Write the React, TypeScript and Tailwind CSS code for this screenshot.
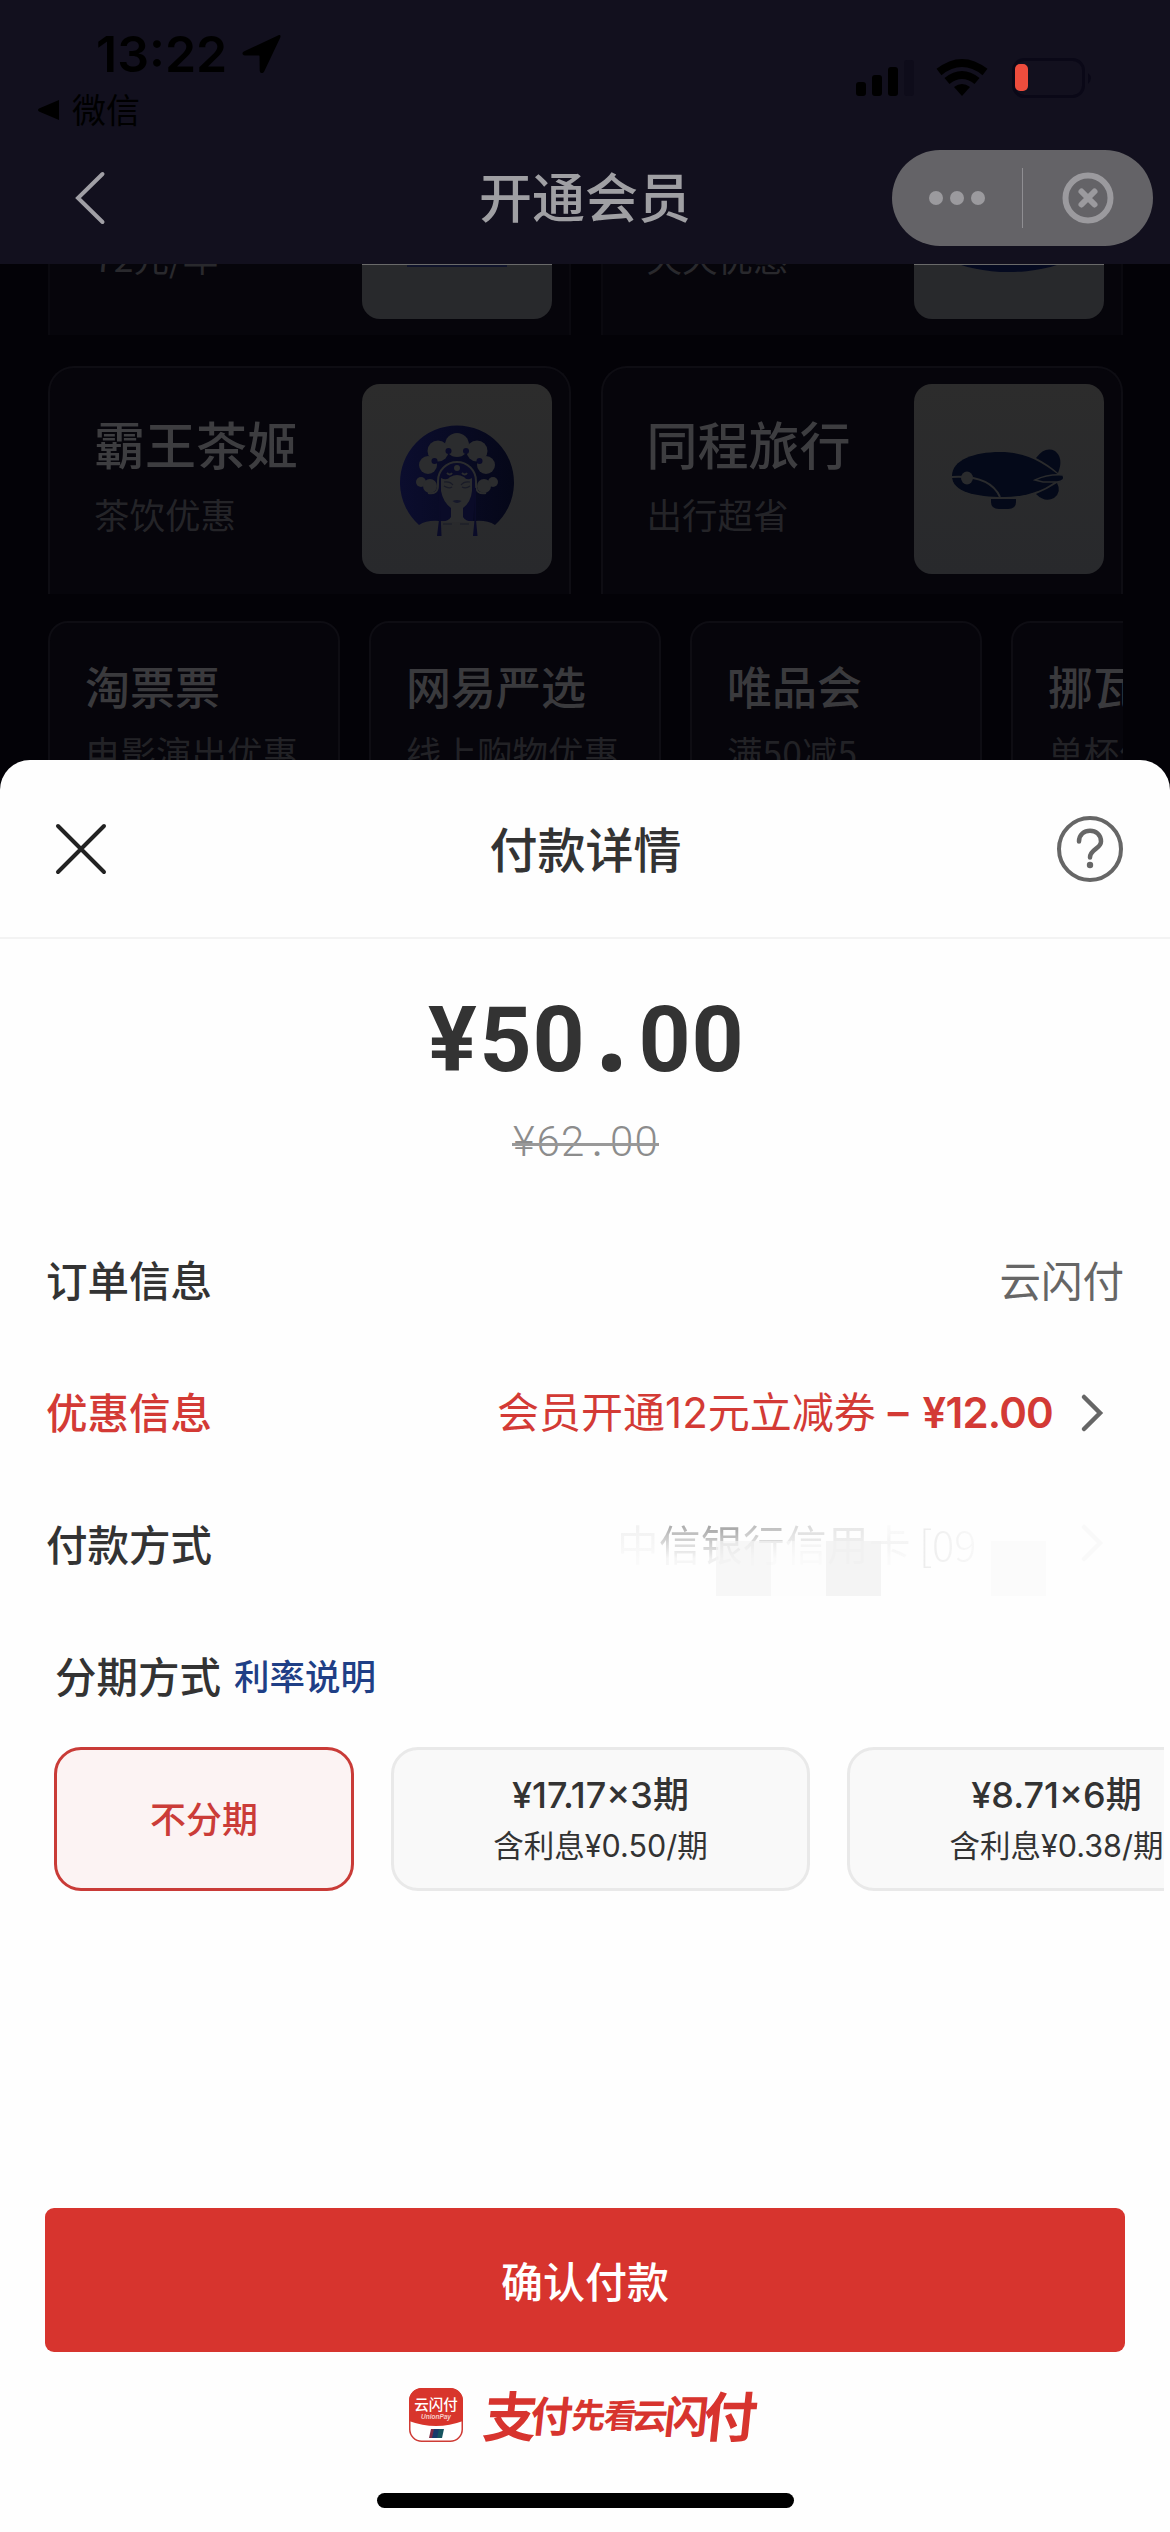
import { clsx } from 'clsx'

interface Perk {
  title: string
  sub: string
  icon?: 'opera' | 'airship'
}

const bigPerks: Perk[] = [
  { title: '霸王茶姬', sub: '茶饮优惠', icon: 'opera' },
  { title: '同程旅行', sub: '出行超省', icon: 'airship' },
]

const smallPerks: Perk[] = [
  { title: '淘票票', sub: '电影演出优惠' },
  { title: '网易严选', sub: '线上购物优惠' },
  { title: '唯品会', sub: '满50减5' },
  { title: '挪瓦咖啡', sub: '单杯优惠' },
]

const plans = [
  { title: '¥17.17×3期', sub: '含利息¥0.50/期' },
  { title: '¥8.71×6期', sub: '含利息¥0.38/期' },
]

const maskedCard = [
  { ch: '中', cls: 'from-[#f2f2f2] to-[#fafafa]' },
  { ch: '信', cls: 'from-[#b0b0b0] via-[#d8d8d8] to-[#f6f6f6]' },
  { ch: '银', cls: 'from-[#a8a8a8] via-[#cccccc] to-[#f0f0f0]' },
  { ch: '行', cls: 'from-[#c0c0c0] via-[#dedede] to-[#f8f8f8]' },
  { ch: '信', cls: 'from-[#dcdcdc] via-[#ececec] to-[#f9f9f9]' },
  { ch: '用', cls: 'from-[#e8e8e8] via-[#eeeeee] to-[#f0f0f0]' },
  { ch: '卡', cls: 'from-[#fafafa] via-[#f4f4f4] to-[#fafafa]' },
]

const slogan = [
  { ch: '支', cls: 'w-[44px] text-[54px]' },
  { ch: '付', cls: 'w-[38px] text-[42px]' },
  { ch: '先', cls: 'w-[36px] text-[34px]' },
  { ch: '看', cls: 'w-[28px] text-[33px]' },
  { ch: '云', cls: 'w-[31px] text-[35px]' },
  { ch: '闪', cls: 'w-[42px] text-[44px]' },
  { ch: '付', cls: 'w-[46px] text-[54px]' },
]

function StatusBar() {
  return (
    <div className="flex h-[134px] justify-between text-black">
      <div className="flex flex-col">
        <div className="mt-[27px] flex items-center pl-[96px]">
          <span className="font-['Inter',sans-serif] text-[50px] leading-[54px] font-semibold">13:22</span>
          <svg viewBox="0 0 40 40" className="ml-[15px] h-[40px] w-[40px]">
            <path d="M36.5 1.2 2.3 17.2C-.6 18.600.2 21.300 3 21.400L16.500 21.600C17.300 21.600 17.500 21.900 17.500 22.600L17.700 36.500C17.800 39.600 21 40 22.300 37.200L38.300 3.400C39 1.500 38 .5 36.500 1.200Z" />
          </svg>
        </div>
        <div className="mt-[8px] flex items-center gap-[12px] pl-[38px]">
          <svg viewBox="0 0 22 22" className="h-[22px] w-[22px]">
            <path d="M21 1v20L1 12.500q-2-1.500 0-3z" />
          </svg>
          <span className="-mt-[2px] text-[34px] leading-[44px]">微信</span>
        </div>
      </div>
      <svg viewBox="0 0 240 50" className="mt-[54px] mr-[76px] h-[50px] w-[240px]">
        <rect x="2" y="28" width="10" height="14" rx="3" />
        <rect x="18" y="21" width="10" height="21" rx="3" />
        <rect x="34" y="13" width="10" height="29" rx="3" />
        <rect x="50" y="6" width="10" height="36" rx="3" fill="#0e0c1a" />
        <g fill="none" stroke="#000" strokeWidth="8">
          <path d="M85 18Q108 0 131 18" />
          <path d="M93 27Q108 15 123 27" />
        </g>
        <path d="M100 33Q108 27 116 33L108 42Z" />
        <rect x="159.500" y="5.500" width="70" height="37" rx="11" fill="none" stroke="#0a0817" strokeWidth="3" />
        <path d="M234 19q6 5 0 11z" fill="#0a0817" />
        <rect x="161" y="10" width="13" height="27" rx="5" fill="#ee4d3d" />
      </svg>
    </div>
  )
}

function NavBar() {
  return (
    <div className="flex h-[131px] items-start">
      <div className="w-[260px] pt-[36px] pl-[74px]">
        <svg viewBox="0 0 32 56" className="h-[56px] w-[32px]" fill="none" stroke="#a09fa5" strokeWidth="4" strokeLinecap="round">
          <path d="M28.500 4 4 28l24.500 24" />
        </svg>
      </div>
      <h1 className="flex-1 pt-[23px] text-center text-[53px] leading-[76px] font-medium text-[#9f9fa3]">开通会员</h1>
      <div className="w-[260px]">
        <div className="mt-[16px] -ml-[18px] flex h-[96px] w-[261px] items-center rounded-full bg-[#646367]">
          <div className="flex w-[130px] justify-center gap-[7px] pr-[1px]">
            <i className="size-[14px] rounded-full bg-[#9b9a9e]" />
            <i className="size-[14px] rounded-full bg-[#9b9a9e]" />
            <i className="size-[14px] rounded-full bg-[#9b9a9e]" />
          </div>
          <div className="h-[60px] w-px bg-[#8f8e92]" />
          <svg viewBox="0 0 52 52" className="ml-[39px] h-[52px] w-[52px]" fill="none" stroke="#9b9a9e" strokeLinecap="round">
            <circle cx="26" cy="26" r="22.500" strokeWidth="6" />
            <path d="m19.500 19.500 13 13m0-13-13 13" strokeWidth="6" />
          </svg>
        </div>
      </div>
    </div>
  )
}

function OperaIcon() {
  return (
    <svg viewBox="0 0 190 190" className="h-full w-full">
      <defs>
        <linearGradient id="disc">
          <stop offset="0" stopColor="#0b0d2e" />
          <stop offset="1" stopColor="#050718" />
        </linearGradient>
      </defs>
      <path d="M57 141A57 57 0 1 1 133 141Q125 136 113 137H77Q65 136 57 141Z" fill="url(#disc)" />
      <g fill="#2b2c2e">
        <circle cx="95" cy="61" r="12" />
        <circle cx="76" cy="67" r="10.500" />
        <circle cx="115" cy="67" r="10.500" />
        <circle cx="66" cy="81" r="9" />
        <circle cx="124" cy="81" r="9" />
        <circle cx="59" cy="98" r="5" />
        <circle cx="131" cy="98" r="5" />
        <circle cx="68" cy="102" r="7" />
        <circle cx="122" cy="102" r="7" />
      </g>
      <g fill="#0a0b28">
        <circle cx="86.500" cy="67" r="3" />
        <circle cx="104" cy="67" r="3" />
        <circle cx="72.500" cy="77" r="3" />
        <circle cx="117.500" cy="77" r="3" />
      </g>
      <path d="M76 108V97a19 19 0 0 1 38 0v11l-3 29H79z" fill="#0a0b28" />
      <path d="M66 109q10 2 10-8v-4a19 19 0 0 1 38 0v4q0 10 10 8" fill="none" stroke="#2b2c2e" strokeWidth="2" />
      <path d="M79 94q6 3 9-1 7-4 14 0 3 4 8 1v13q-1 11-9 17v9q2 4 10 5H79q8-1 10-5v-9q-8-6-10-17z" fill="#2b2c2e" />
      <path d="M77 104v32l-2 16h4.500l-.7-16V104zm35.500 0v32l-1.500 16h4.500l-1.500-16V104z" fill="#0a0b28" />
      <circle cx="95" cy="84" r="3" fill="#2b2c2e" />
      <path d="M85 89q3 3 5 0m10 0q3 3 5 0" stroke="#2b2c2e" strokeWidth="2" fill="none" />
      <path d="M82 98q6-1 9 3m8 0q3-4 9-3M82 102q5 3 8 1m10 0q4 2 8-1M81 140h9m8 0h9" stroke="#191b27" strokeWidth="1.200" fill="none" />
      <path d="M90.500 117q4.500-2 9 0-4.500 4-9 0z" fill="#16182a" />
    </svg>
  )
}

function AirshipIcon() {
  return (
    <svg viewBox="0 0 190 190" className="h-full w-full" fill="#040919">
      <path d="M122 74Q131 62 141 67Q150 74 144 89Q134 80 122 74Z" />
      <path d="M122 110Q134 105 143 99Q148 108 140 114Q131 119 122 110Z" />
      <path d="M38 92C38 76 60 68 86 68C112 68 130 79 147 93C130 108 110 113 90 113C62 113 38 108 38 92Z" />
      <path d="M121 96Q134 90 149 91Q152 97 143 98H129Z" stroke="#2a2b2d" strokeWidth="1.500" />
      <path d="M38 93q38-2 48 20" fill="none" stroke="#2a2b2d" strokeWidth="2" />
      <ellipse cx="53" cy="94" rx="6" ry="6.500" fill="#2a2b2d" />
      <path d="M77 115h25v3q0 7-8 7h-9q-8 0-8-7z" />
    </svg>
  )
}

function BigPerk({ perk }: { perk: Perk }) {
  return (
    <div className="flex h-[228px] w-[523px] justify-between rounded-t-[26px] border-2 border-b-0 border-[#0e0d13] bg-[#06050b] pt-[16px] pr-[17px] pl-[44px]">
      <div className="pt-[23px]">
        <p className="text-[51px] leading-[72px] font-medium text-[#3d3d40]">{perk.title}</p>
        <p className="mt-[11px] text-[35.500px] leading-[48px] text-[#242428]">{perk.sub}</p>
      </div>
      <div className="size-[190px] rounded-[18px] bg-linear-to-b from-[#2c2c2c] to-[#28292c]">
        {perk.icon === 'opera' ? <OperaIcon /> : <AirshipIcon />}
      </div>
    </div>
  )
}

function ScrolledPerk({ sub, logo }: { sub: string; logo: string }) {
  return (
    <div className="flex h-[71px] w-[523px] justify-between border-x-2 border-[#0a090f] bg-[#06050b] pr-[17px] pl-[44px]">
      <p className="-mt-[31px] text-[35.500px] leading-[48px] text-[#29292d]">{sub}</p>
      <div className="flex h-[55px] w-[190px] justify-center overflow-hidden rounded-b-[18px] border-t border-[#6a6a6a] bg-[#28292c]">
        <div className={logo} />
      </div>
    </div>
  )
}

function MemberPage() {
  return (
    <div className="h-[800px] overflow-hidden bg-[#030207]">
      <header className="h-[264px] bg-[#12101e]">
        <StatusBar />
        <NavBar />
      </header>
      <main className="overflow-hidden pr-[47px] pl-[48px]">
        <div className="flex h-[72px] gap-[30px] overflow-hidden">
          <ScrolledPerk sub="72元/年" logo="h-[2px] w-[100px] bg-[#10142c]" />
          <ScrolledPerk sub="天天优惠" logo="-mt-[84px] h-[91px] w-[180px] rounded-[50%] bg-[#050a20]" />
        </div>
        <div className="mt-[30px] flex gap-[30px]">
          {bigPerks.map((p) => (
            <BigPerk key={p.title} perk={p} />
          ))}
        </div>
        <div className="mt-[27px] flex gap-[29px] overflow-hidden">
          {smallPerks.map((p) => (
            <div
              key={p.title}
              className="h-[200px] w-[292px] shrink-0 rounded-[20px] border-2 border-[#0e0d13] bg-[#06050b] pt-[31px] pl-[35px] whitespace-nowrap"
            >
              <p className="text-[45px] leading-[64px] font-medium text-[#3a3a3d]">{p.title}</p>
              <p className="mt-[10px] text-[35.500px] leading-[48px] text-[#222226]">{p.sub}</p>
            </div>
          ))}
        </div>
      </main>
    </div>
  )
}

// fixed-pitch amount, every character sits in a cell of the same width
function Amount({ value, cell, dot, className }: { value: string; cell: string; dot: string; className: string }) {
  return (
    <div className={clsx("flex items-baseline justify-center font-['Roboto',sans-serif]", className)}>
      {value.split('').map((ch, i) => (
        <span key={i} className={clsx('text-center', cell, ch === '.' && dot)}>
          {ch}
        </span>
      ))}
    </div>
  )
}

function Chevron({ color }: { color: string }) {
  return (
    <svg viewBox="0 0 24 40" className="h-[40px] w-[24px]" fill="none" stroke={color} strokeWidth="4.500" strokeLinecap="round">
      <path d="m4 4 16 16L4 36" />
    </svg>
  )
}

function UnionPayLogo() {
  return (
    <svg viewBox="0 0 54 54" className="h-[54px] w-[54px]">
      <rect x=".75" y=".75" width="52.500" height="52.500" rx="12" fill="#fff" stroke="#cf3b35" strokeWidth="1.500" />
      <path d="M0 33V13A13 13 0 0 1 13 0H41A13 13 0 0 1 54 13V33Q27 43 0 33Z" fill="#d8352c" />
      <text x="27" y="22" textAnchor="middle" fontSize="14.500" fontWeight="500" fill="#fff" fontFamily="Noto Sans CJK SC, sans-serif">
        云闪付
      </text>
      <text x="27" y="31" textAnchor="middle" fontSize="6.500" fontStyle="italic" fontWeight="700" fill="#f7cfca" fontFamily="Liberation Sans, sans-serif">
        UnionPay
      </text>
      <path d="M22 41h5l-2 9h-5z" fill="#7b2b45" />
      <path d="M25 41h6l-2 9h-6z" fill="#163a6b" />
      <path d="M30 41h5l-2 9h-5z" fill="#15545f" />
    </svg>
  )
}

function PaymentSheet() {
  return (
    <section className="absolute inset-x-0 top-[760px] bottom-0 flex flex-col rounded-t-[30px] bg-[#fefefe]">
      <div className="flex h-[179px] items-center justify-between border-b-2 border-[#f3f3f3] pr-[46px] pl-[54px]">
        <svg viewBox="0 0 54 54" className="h-[54px] w-[54px]" fill="none" stroke="#222" strokeWidth="4" strokeLinecap="round">
          <path d="m4 4 46 46M50 4 4 50" />
        </svg>
        <h2 className="pb-[4px] pl-[7px] text-[48px] leading-[66px] font-medium text-[#333]">付款详情</h2>
        <svg viewBox="0 0 68 68" className="h-[68px] w-[68px]" fill="none" stroke="#666" strokeWidth="4" strokeLinecap="round">
          <circle cx="34" cy="34" r="31" />
          <path d="M23 26.500C23 12 45 12 45 26.500C45 34 34 34 34 42.500" strokeWidth="4.500" />
          <circle cx="34" cy="50" r="3.200" fill="#666" stroke="none" />
        </svg>
      </div>

      <Amount
        value="¥50.00"
        cell="w-[53px]"
        dot="font-['Open_Sans',sans-serif] text-[112px] leading-[80px]"
        className="mt-[48px] h-[106px] text-[91px] leading-[106px] font-bold text-[#333]"
      />
      <div className="relative mx-auto mt-[24px]">
        <Amount
          value="¥62.00"
          cell="w-[24.500px]"
          dot="font-normal"
          className="h-[50px] text-[42px] leading-[50px] font-light text-[#8c8c8c]"
        />
        <i className="absolute inset-x-0 top-[26px] h-[3px] bg-[#999]" />
      </div>

      <div className="mt-[46px] px-[46px] text-[41.500px] text-[#333]">
        <div className="flex h-[132px] items-center justify-between">
          <span className="font-medium">订单信息</span>
          <span className="text-[#666]">云闪付</span>
        </div>
        <div className="flex h-[132px] items-center justify-between text-[#d33a35]">
          <span className="font-medium">优惠信息</span>
          <div className="flex items-center pt-[3px] pr-[20px]">
            <span className="font-['Inter','Noto_Sans_CJK_SC',sans-serif] text-[42px]">会员开通12元立减券</span>
            <span className="ml-[12px] font-['Inter',sans-serif] font-semibold">–</span>
            <span className="ml-[14px] font-['Inter',sans-serif] text-[42px] font-semibold tracking-[-0.8px]">¥12.00</span>
            <span className="ml-[27px]">
              <Chevron color="#666" />
            </span>
          </div>
        </div>
        <div className="relative flex h-[132px] items-center justify-between">
          <span className="font-medium">付款方式</span>
          <div className="flex items-center pr-[20px]">
            {maskedCard.map((c, i) => (
              <span key={i} className={clsx('w-[42px] bg-linear-to-b from-25% to-75% bg-clip-text text-transparent', c.cls)}>
                {c.ch}
              </span>
            ))}
            <span className="ml-[8px] w-[141px] bg-linear-to-r from-[#ececec] to-[#fbfbfb] to-50% bg-clip-text font-light text-transparent">[09</span>
            <span className="ml-[20px]">
              <Chevron color="#f9f9f9" />
            </span>
          </div>
          <div className="absolute top-[64px] right-[78px] flex">
            <i className="size-[55px] bg-[#f3f3f3]/70" />
            <i className="size-[55px] bg-[#fcfcfc]/50" />
            <i className="size-[55px] bg-[#f1f1f1]/80" />
            <i className="ml-[110px] size-[55px] bg-[#fbfbfb]" />
          </div>
        </div>
        <div className="flex h-[132px] items-center gap-[13px] pl-[9px]">
          <span className="font-medium">分期方式</span>
          <span className="text-[35.500px] font-medium text-[#1f3f86]">利率说明</span>
        </div>
      </div>

      <div className="mt-[6px] mr-[6px] ml-[54px] flex gap-[37px] overflow-hidden">
        <div className="flex h-[144px] w-[300px] shrink-0 items-center justify-center rounded-[27px] border-3 border-[#c93b37] bg-[#fcf3f3] pb-[4px] text-[36px] font-medium text-[#cb3c38]">
          不分期
        </div>
        {plans.map((p) => (
          <div
            key={p.title}
            className="flex h-[144px] w-[419px] shrink-0 flex-col items-center justify-center rounded-[27px] border-3 border-[#e9e9e9] bg-[#f9f9f9] pt-[4px] font-['Inter','Noto_Sans_CJK_SC',sans-serif] text-[#333]"
          >
            <p className="text-[36px] leading-[50px] font-medium">{p.title}</p>
            <p className="text-[30.500px] leading-[52px]">{p.sub}</p>
          </div>
        ))}
      </div>

      <button className="mx-[45px] mt-[317px] h-[144px] rounded-[9px] bg-[#d7342e] pb-[2px] text-[42px] font-medium text-white">
        确认付款
      </button>

      <div className="mt-[36px] flex h-[54px] items-center pl-[409px]">
        <UnionPayLogo />
        <div className="mb-[3px] ml-[26px] flex -skew-x-6 items-center leading-[54px] font-bold text-[#d7342e]">
          {slogan.map((s, i) => (
            <span key={i} className={clsx('flex justify-center', s.cls)}>
              {s.ch}
            </span>
          ))}
        </div>
      </div>
      <div className="mx-auto mt-[51px] h-[15px] w-[417px] rounded-full bg-black" />
    </section>
  )
}

export default function App() {
  return (
    <div className="relative h-[2532px] w-[1170px] overflow-hidden font-['Noto_Sans_CJK_SC',sans-serif]">
      <MemberPage />
      <PaymentSheet />
    </div>
  )
}
